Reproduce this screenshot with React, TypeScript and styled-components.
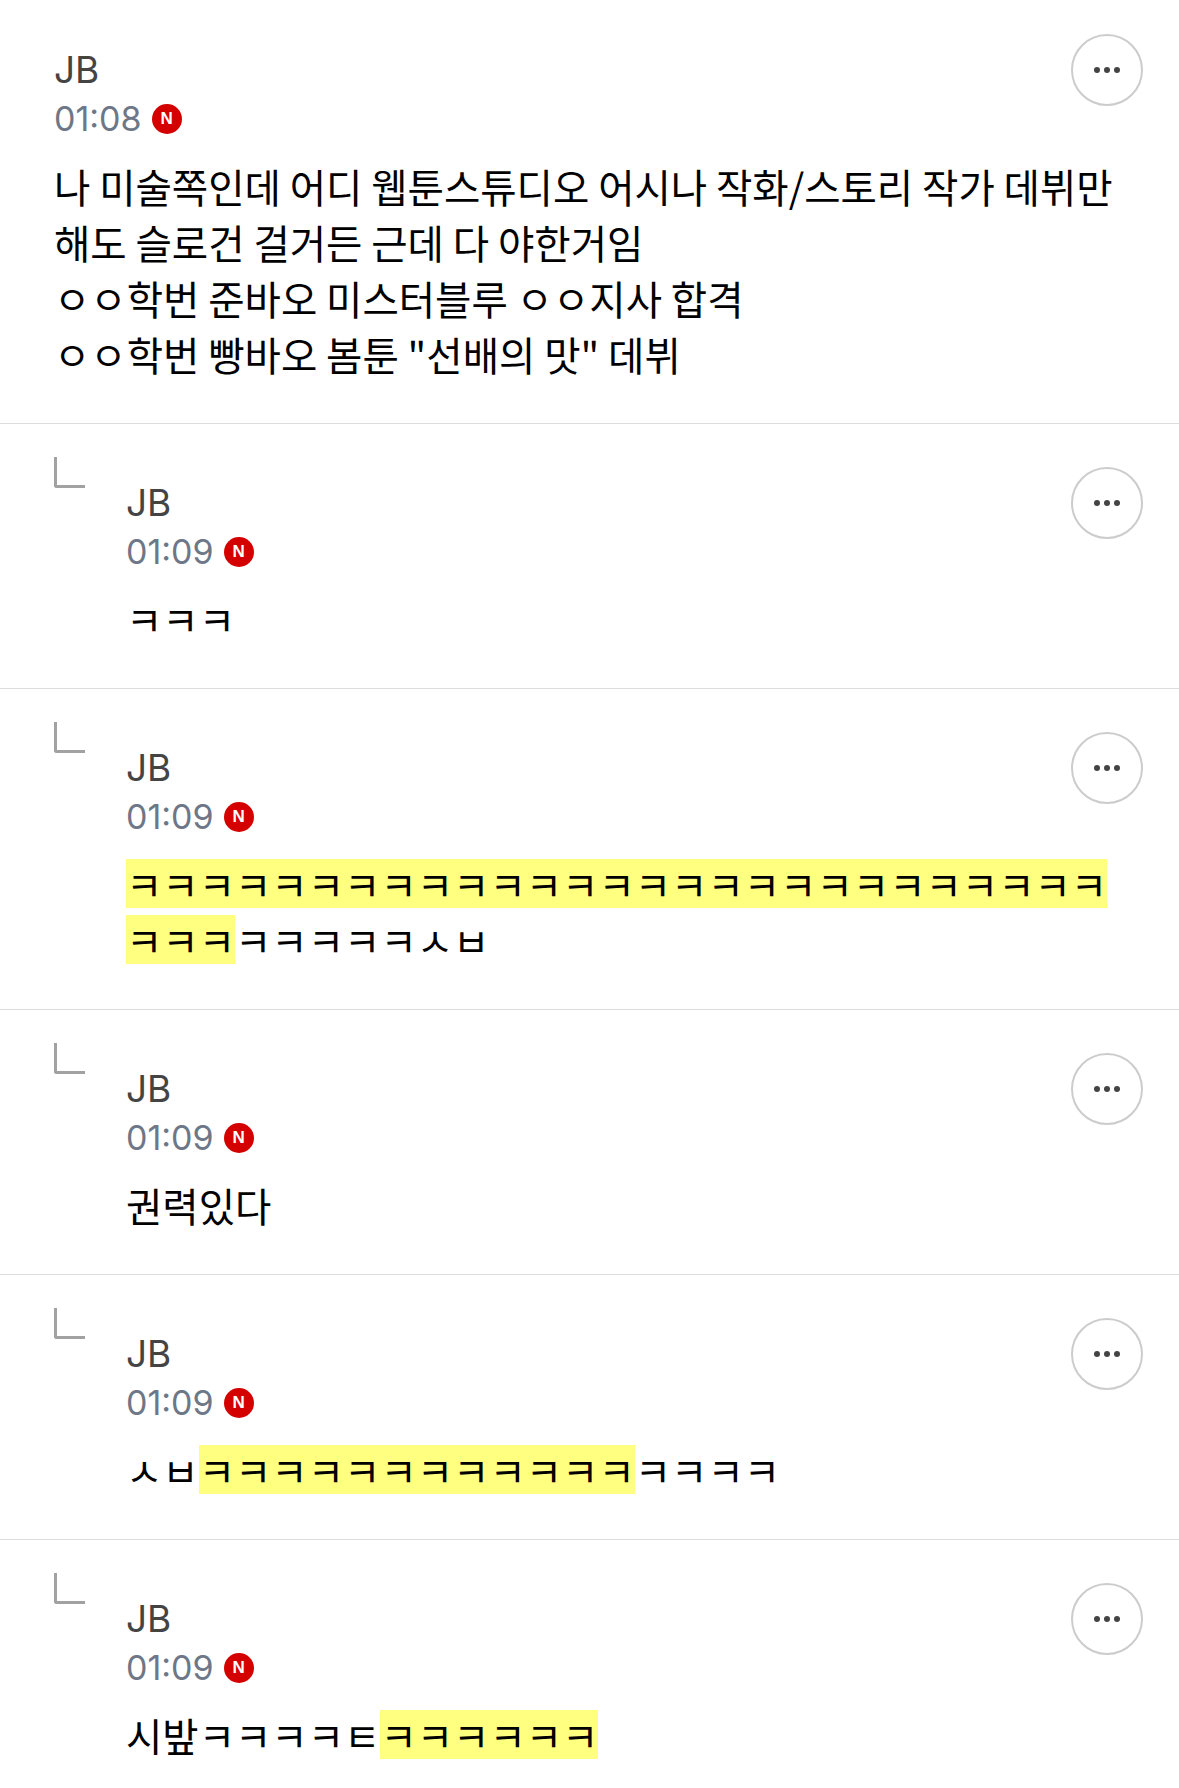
import React from "react";
import styled, { createGlobalStyle } from "styled-components";

const GlobalStyle = createGlobalStyle`
  html, body {
    margin: 0;
    padding: 0;
    background: #fff;
  }
  body {
    font-family: "Noto Sans CJK KR", "Noto Sans", sans-serif;
  }
`;

interface CommentData {
  time: string;
  body: React.ReactNode;
  reply?: boolean;
}

const comments: CommentData[] = [
  {
    time: "01:08",
    body: (
      <>
        나 미술쪽인데 어디 웹툰스튜디오 어시나 작화/스토리 작가 데뷔만 해도 슬로건 걸거든 근데 다 야한거임
        <br />
        ㅇㅇ학번 준바오 미스터블루 ㅇㅇ지사 합격
        <br />
        ㅇㅇ학번 빵바오 봄툰 "선배의 맛" 데뷔
      </>
    ),
  },
  { time: "01:09", reply: true, body: "ㅋㅋㅋ" },
  {
    time: "01:09",
    reply: true,
    body: (
      <>
        <Highlight>ㅋㅋㅋㅋㅋㅋㅋㅋㅋㅋㅋㅋㅋㅋㅋㅋㅋㅋㅋㅋㅋㅋㅋㅋㅋㅋㅋㅋㅋㅋ</Highlight>ㅋㅋㅋㅋㅋㅅㅂ
      </>
    ),
  },
  { time: "01:09", reply: true, body: "권력있다" },
  {
    time: "01:09",
    reply: true,
    body: (
      <>
        ㅅㅂ<Highlight>ㅋㅋㅋㅋㅋㅋㅋㅋㅋㅋㅋㅋ</Highlight>ㅋㅋㅋㅋ
      </>
    ),
  },
  {
    time: "01:09",
    reply: true,
    body: (
      <>
        시밮ㅋㅋㅋㅋㅌ<Highlight>ㅋㅋㅋㅋㅋㅋ</Highlight>
      </>
    ),
  },
];

function Highlight({ children }: { children: React.ReactNode }) {
  return <Marked>{children}</Marked>;
}

function Comment({ time, body, reply }: CommentData) {
  return (
    <Row>
      {reply && <ReplyMark />}
      <Content $reply={reply}>
        <Header>
          <Meta>
            <Name>JB</Name>
            <TimeLine>
              {time}
              <Badge>N</Badge>
            </TimeLine>
          </Meta>
          <MoreButton>
            <svg width="26" height="6" viewBox="0 0 26 6">
              <circle cx="3" cy="3" r="3" fill="#444" />
              <circle cx="13" cy="3" r="3" fill="#444" />
              <circle cx="23" cy="3" r="3" fill="#444" />
            </svg>
          </MoreButton>
        </Header>
        <Body>{body}</Body>
      </Content>
    </Row>
  );
}

export default function App() {
  return (
    <>
      <GlobalStyle />
      <List>
        {comments.map((c, i) => (
          <Comment key={i} {...c} />
        ))}
      </List>
    </>
  );
}

const List = styled.div`
  width: 1179px;
  height: 1788px;
  overflow: hidden;
  background: #fff;
`;

const Row = styled.div`
  display: flex;
  padding: 34px 36px 41px 54px;
  border-bottom: 1px solid #ddd;
`;

const ReplyMark = styled.div`
  flex: none;
  width: 28px;
  height: 28px;
  margin: -1px 41px 0 0;
  border-left: 3px solid #a2a2a2;
  border-bottom: 3px solid #a2a2a2;
  border-bottom-left-radius: 3px;
`;

const Content = styled.div<{ $reply?: boolean }>`
  flex: 1;
  min-width: 0;
  margin-top: ${(p) => (p.$reply ? "9px" : "0")};
`;

const Header = styled.div`
  display: flex;
  justify-content: space-between;
  align-items: flex-start;
`;

const Meta = styled.div`
  display: flex;
  flex-direction: column;
`;

const Name = styled.div`
  font-family: Inter, "Liberation Sans", sans-serif;
  font-size: 37px;
  line-height: 48px;
  color: #444;
  margin-top: 12px;
`;

const TimeLine = styled.div`
  display: flex;
  align-items: center;
  gap: 10px;
  font-family: Inter, "Liberation Sans", sans-serif;
  font-size: 34px;
  line-height: 49px;
  color: #6e7787;
`;

const Badge = styled.span`
  display: flex;
  align-items: center;
  justify-content: center;
  width: 30px;
  height: 30px;
  border-radius: 50%;
  background: #d40000;
  color: #fff;
  font-family: "Liberation Sans", sans-serif;
  font-size: 17px;
  font-weight: 700;
`;

const MoreButton = styled.div`
  flex: none;
  display: flex;
  align-items: center;
  justify-content: center;
  width: 72px;
  height: 72px;
  box-sizing: border-box;
  border: 2px solid #ccc;
  border-radius: 50%;
`;

const Body = styled.div`
  margin-top: 15px;
  padding-right: 27px;
  font-size: 39.5px;
  line-height: 56px;
  color: #000;
  word-break: break-all;
`;

/* plain inline background would fill Noto's tall content box, so paint a shorter band */
const Marked = styled.span`
  background: linear-gradient(#ffff80, #ffff80) center / 100% 49px no-repeat;
  -webkit-box-decoration-break: clone;
  box-decoration-break: clone;
`;
